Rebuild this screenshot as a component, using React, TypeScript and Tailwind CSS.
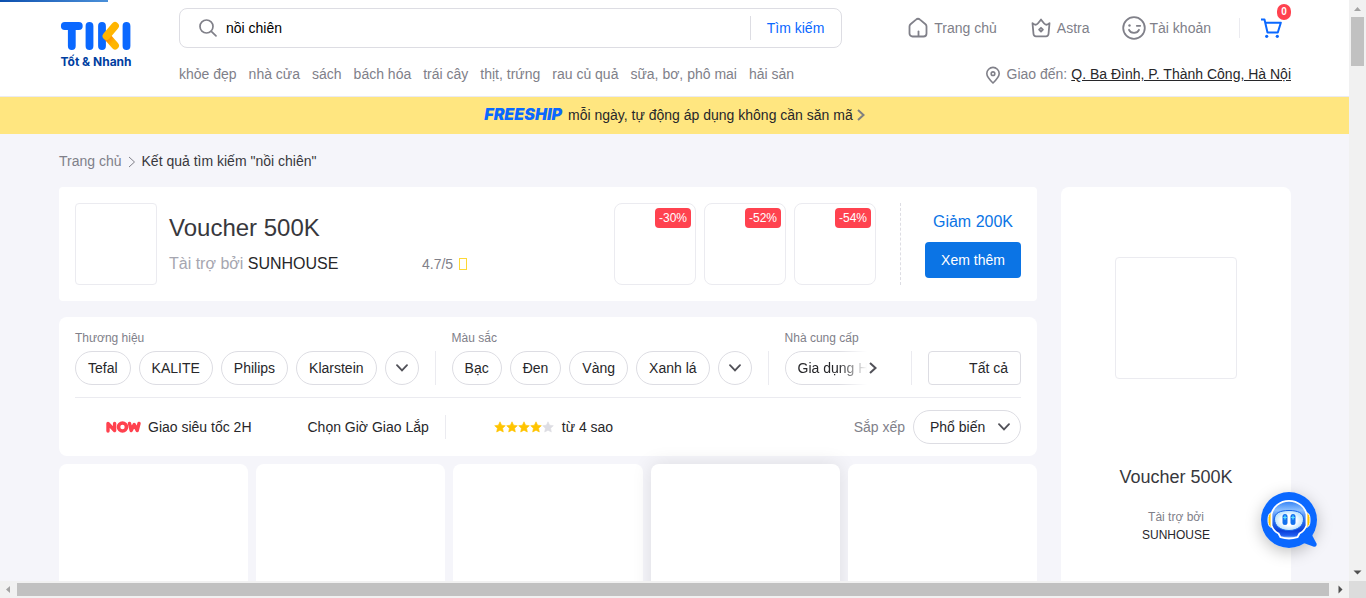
import type { ReactNode } from "react";

const quickLinks = [
  "khỏe đẹp",
  "nhà cửa",
  "sách",
  "bách hóa",
  "trái cây",
  "thịt, trứng",
  "rau củ quả",
  "sữa, bơ, phô mai",
  "hải sản",
];

function Chevron({ className = "", width = 2 }: { className?: string; width?: number }) {
  return (
    <svg viewBox="0 0 8 12" className={`h-3 w-2 ${className}`} fill="none" stroke="currentColor" strokeWidth={width} aria-hidden="true">
      <path d="M1 1l5.5 5L1 11" />
    </svg>
  );
}

function ChevronDown() {
  return (
    <svg viewBox="0 0 12 8" className="h-2 w-3" fill="none" stroke="#515158" strokeWidth="1.8" strokeLinecap="round" aria-hidden="true">
      <path d="M1 1.200l5 5.200 5-5.200" />
    </svg>
  );
}

function Logo() {
  return (
    <a href="#" className="flex w-[72px] shrink-0 flex-col items-center gap-0.5 pt-3">
      <svg viewBox="0 0 72 32" className="h-8 w-[72px]" fill="none" strokeWidth="7.800" strokeLinecap="round" aria-hidden="true">
        <defs>
          <linearGradient id="kFold" x1="0" y1="0" x2="1" y2="1">
            <stop offset="0.1" stopColor="#ff8a00" />
            <stop offset="0.7" stopColor="#ffb500" />
          </linearGradient>
        </defs>
        <path d="M5.800 6h14M12.800 6.500V26M30.500 6v20M43 6v20M67.500 6v20" stroke="#0a68ff" />
        <path d="M48.500 17L56 25.500" stroke="url(#kFold)" />
        <path d="M56 6L47.500 16" stroke="#ffb500" />
      </svg>
      <span className="whitespace-nowrap pl-0.5 font-['Inter'] text-[12px] font-bold leading-4 text-[#003ea1]">Tốt &amp; Nhanh</span>
    </a>
  );
}

function NavItem({ icon, children }: { icon: ReactNode; children: ReactNode }) {
  return (
    <a href="#" className="flex items-center gap-1 px-4 text-[#808089]">
      {icon}
      <span>{children}</span>
    </a>
  );
}

function HomeIcon() {
  return (
    <svg viewBox="0 0 24 24" className="size-6" fill="none" stroke="currentColor" strokeWidth="1.800" strokeLinecap="round" strokeLinejoin="round" aria-hidden="true">
      <path d="M3.500 10.500c0-.9.300-1.600 1-2.200l5.500-4.700a3 3 0 0 1 4 0l5.500 4.700c.7.6 1 1.300 1 2.200v7a3 3 0 0 1-3 3h-11a3 3 0 0 1-3-3z" />
      <path d="M12.500 15.500v4.500" />
    </svg>
  );
}

function CrownIcon() {
  return (
    <svg viewBox="0 0 24 24" className="size-6" fill="none" stroke="currentColor" strokeWidth="1.800" strokeLinecap="round" strokeLinejoin="round" aria-hidden="true">
      <path d="M3.500 7.200c1.500 1.400 2.700 1.900 4 1.300C9 7.800 10.500 5.500 12 3.500c1.500 2 3 4.300 4.500 5 1.300.6 2.500.1 4-1.300l-1 10.800a2.500 2.500 0 0 1-2.500 2.300H7A2.500 2.500 0 0 1 4.500 18z" />
      <path d="M12 11.800l1.900 1.900-1.900 1.900-1.900-1.900z" />
    </svg>
  );
}

function SmileIcon() {
  return (
    <svg viewBox="0 0 24 24" className="size-6" fill="none" stroke="currentColor" strokeWidth="1.800" strokeLinecap="round" aria-hidden="true">
      <circle cx="12" cy="12" r="10.800" />
      <path d="M7 13.800c.8 1.900 2.700 3 5 3s4.200-1.100 5-3M14.800 9.800h3.400" />
      <circle cx="7.500" cy="9.500" r="1.200" fill="currentColor" stroke="none" />
    </svg>
  );
}

function CartIcon() {
  return (
    <svg viewBox="0 0 24 24" className="size-6" fill="none" stroke="#0a68ff" strokeWidth="2" aria-hidden="true">
      <path d="M2 3.500h3.500l3 13h10.300l3-9.800H6.300" strokeLinejoin="round" />
      <circle cx="7.700" cy="20.300" r="1.600" fill="#0a68ff" stroke="none" />
      <circle cx="18.300" cy="20.300" r="1.600" fill="#0a68ff" stroke="none" />
    </svg>
  );
}

function Header() {
  return (
    <header className="border-b border-[#ebebf0] bg-white">
      <div className="flex gap-12 pt-2 pr-[58px] pb-2 pl-[59px]">
        <Logo />
        <div className="min-w-0 flex-1">
          <form className="flex h-10 items-center rounded-lg border border-[#dddde3] pl-[18px]">
            <svg viewBox="0 0 20 20" className="size-5 shrink-0" fill="none" stroke="#808089" strokeWidth="1.700" strokeLinecap="round" aria-hidden="true">
              <circle cx="8.500" cy="8.500" r="6.500" />
              <path d="M13.300 13.300l4.700 4.500" />
            </svg>
            <input aria-label="Tìm kiếm sản phẩm" defaultValue="nồi chiên" className="ml-2 h-9 min-w-0 flex-1 text-black outline-none" />
            <span className="h-6 w-px bg-[#dddde3]" />
            <button type="button" className="pr-[17px] pl-4 text-[#0a68ff]">
              Tìm kiếm
            </button>
          </form>
          <nav className="mt-4 flex h-6 flex-wrap gap-x-3 overflow-hidden leading-[21px] text-[#808089]">
            {quickLinks.map((l) => (
              <a key={l} href="#">
                {l}
              </a>
            ))}
          </nav>
        </div>
        <div className="flex shrink-0 flex-col items-end gap-4">
          <div className="flex h-10 items-center">
            <NavItem icon={<HomeIcon />}>Trang chủ</NavItem>
            <NavItem icon={<CrownIcon />}>Astra</NavItem>
            <NavItem icon={<SmileIcon />}>Tài khoản</NavItem>
            <span className="mx-3 h-5 w-px bg-[#ebebf0]" />
            <a href="#" aria-label="Giỏ hàng" className="relative mr-2 ml-[7px]">
              <CartIcon />
              <span className="absolute -top-3 left-[18px] flex h-4 w-3.5 items-center justify-center rounded-full bg-[#ff424f] text-[10px] font-bold text-white">
                0
              </span>
            </a>
          </div>
          <div className="flex items-center gap-1 leading-[21px] text-[#808089]">
            <svg viewBox="0 0 20 20" className="size-5" fill="none" stroke="currentColor" strokeWidth="1.600" aria-hidden="true">
              <path d="M10 18c-3.200-3-6.200-5.800-6.200-9.400a6.200 6.200 0 0 1 12.400 0C16.200 12.200 13.200 15 10 18z" />
              <circle cx="10" cy="8.700" r="1.800" />
            </svg>
            <span>Giao đến:</span>
            <a href="#" className="text-[#27272a] underline">
              Q. Ba Đình, P. Thành Công, Hà Nội
            </a>
          </div>
        </div>
      </div>
    </header>
  );
}

function Banner() {
  return (
    <a href="#" className="flex h-[37px] items-center justify-center bg-[#ffe680] pb-0.5 text-[#27272a]">
      <span className="mr-1.5 font-['Inter'] text-[16px] font-black italic text-[#0a68ff]">FREESHIP</span>
      <span>mỗi ngày, tự động áp dụng không cần săn mã</span>
      <Chevron className="ml-1 text-[#808080]" />
    </a>
  );
}

function VoucherCard() {
  return (
    <section className="flex rounded bg-white p-4">
      <div className="size-[82px] rounded border border-[#ebebf0]" />
      <div className="ml-3 flex flex-1 flex-col pt-[9px]">
        <h2 className="text-2xl leading-8 text-[#38383d]">Voucher 500K</h2>
        <div className="mt-2 flex items-center leading-6">
          <p className="w-[253px] text-base text-[#a6a6b0]">
            Tài trợ bởi <span className="text-[#27272a]">SUNHOUSE</span>
          </p>
          <span className="text-[#808089]">4.7/5</span>
          <span className="ml-1.5 h-3 w-2 border border-[#fdd836]" />
        </div>
      </div>
      <div className="flex gap-2">
        {["-30%", "-52%", "-54%"].map((d) => (
          <div key={d} className="flex size-[82px] items-start justify-end rounded-lg border border-[#ebebf0] p-1">
            <span className="rounded bg-[#ff424f] px-1 text-xs leading-5 font-medium text-white">{d}</span>
          </div>
        ))}
      </div>
      <div className="ml-6 flex flex-col items-center gap-2 border-l border-dashed border-[#dddde3] pt-[7px] pl-6">
        <span className="text-base text-[#0b74e5]">Giảm 200K</span>
        <button type="button" className="h-9 w-24 rounded bg-[#0b74e5] text-white">
          Xem thêm
        </button>
      </div>
    </section>
  );
}

const chip = "h-[34px] shrink-0 rounded-full border border-[#dddde3] px-3 whitespace-nowrap text-[#27272a]";

function FilterGroup({ title, options }: { title: string; options: string[] }) {
  return (
    <div className="flex flex-col gap-[5px]">
      <h3 className="text-xs leading-4 text-[#808089]">{title}</h3>
      <div className="flex gap-2">
        {options.map((o) => (
          <button key={o} type="button" className={chip}>
            {o}
          </button>
        ))}
        <button type="button" aria-label="Xem thêm" className="flex size-[34px] items-center justify-center rounded-full border border-[#dddde3]">
          <ChevronDown />
        </button>
      </div>
    </div>
  );
}

function Divider() {
  return <span className="mx-4 h-[34px] w-px shrink-0 bg-[#ebebf0]" />;
}

function NowMark() {
  return (
    <svg viewBox="0 0 35 12" className="h-3 w-[35px]" fill="none" stroke="#ff424f" strokeWidth="3.400" strokeLinecap="round" strokeLinejoin="round" aria-hidden="true">
      <path d="M2 10V2.500l6.600 7V2.500" />
      <circle cx="16.500" cy="6" r="4" strokeWidth="3.600" />
      <path d="M23.500 2.500l1.700 7 3-6 3 6L33 2.500" strokeWidth="3.400" />
    </svg>
  );
}

function Stars() {
  return (
    <svg viewBox="0 0 60 12" className="h-3 w-[60px]" aria-hidden="true">
      {[0, 1, 2, 3, 4].map((i) => (
        <path
          key={i}
          transform={`translate(${i * 12} 0)`}
          fill={i < 4 ? "#ffc400" : "#dddde3"}
          stroke={i < 4 ? "#ffc400" : "#dddde3"}
          strokeWidth="0.600"
          strokeLinejoin="round"
          d="M6 .8l1.600 3.400 3.700.5-2.700 2.600.7 3.700L6 9.200 2.700 11l.7-3.700L.7 4.700l3.700-.5z"
        />
      ))}
    </svg>
  );
}

function HiddenBox() {
  return <input type="checkbox" className="size-4 appearance-none" />;
}

function Filters() {
  return (
    <section className="mt-4 rounded-lg bg-white px-4 pt-[13px] pb-3">
      <div className="flex items-end border-b border-[#ebebf0] pb-3">
        <FilterGroup title="Thương hiệu" options={["Tefal", "KALITE", "Philips", "Klarstein"]} />
        <Divider />
        <FilterGroup title="Màu sắc" options={["Bạc", "Đen", "Vàng", "Xanh lá"]} />
        <Divider />
        <div className="flex min-w-0 flex-1 flex-col gap-[5px]">
          <h3 className="text-xs leading-4 text-[#808089]">Nhà cung cấp</h3>
          <div className="flex h-[34px] items-center">
            <div className="w-[82px] overflow-hidden [mask-image:linear-gradient(to_right,black_65%,transparent)]">
              <button type="button" className={chip}>
                Gia dụng HT
              </button>
            </div>
            <button type="button" aria-label="Tiếp theo" className="ml-0.5">
              <Chevron className="text-[#515158]" />
            </button>
          </div>
        </div>
        <Divider />
        <button type="button" className="h-[34px] rounded border border-[#dddde3] pr-3 pl-10 whitespace-nowrap text-[#27272a]">
          Tất cả
        </button>
      </div>
      <div className="flex items-center pt-3 text-[#27272a]">
        <label className="flex items-center gap-[7px] pl-2">
          <HiddenBox />
          <NowMark />
          Giao siêu tốc 2H
        </label>
        <label className="ml-8 flex items-center gap-2">
          <HiddenBox />
          Chọn Giờ Giao Lắp
        </label>
        <span className="mx-4 h-6 w-px bg-[#ebebf0]" />
        <label className="flex items-center gap-2 pl-2">
          <HiddenBox />
          <Stars />
          từ 4 sao
        </label>
        <label htmlFor="sort" className="ml-auto text-[#808089]">
          Sắp xếp
        </label>
        <div className="ml-2 grid items-center">
          <select id="sort" className="col-start-1 row-start-1 h-[34px] w-[108px] appearance-none rounded-full border border-[#dddde3] px-4 outline-none">
            <option>Phổ biến</option>
          </select>
          <span className="pointer-events-none col-start-1 row-start-1 mr-[11px] justify-self-end">
            <ChevronDown />
          </span>
        </div>
      </div>
    </section>
  );
}

function ChatBot() {
  return (
    <button type="button" aria-label="Trợ lý" className="absolute right-8 bottom-[33px] size-14 rounded-full shadow-[0_4px_16px_rgba(0,0,0,0.25)]">
      <svg viewBox="0 0 56 56" className="size-14 overflow-visible" aria-hidden="true">
        <defs>
          <linearGradient id="helmet" x1="0" y1="0" x2="0" y2="1">
            <stop offset="0" stopColor="#2f7ff5" />
            <stop offset="0.250" stopColor="#8cc0ff" />
            <stop offset="0.500" stopColor="#2f74f2" />
            <stop offset="0.800" stopColor="#0a3fd8" />
            <stop offset="0.920" stopColor="#1f5cf0" />
            <stop offset="1" stopColor="#8cc4ff" />
          </linearGradient>
          <radialGradient id="face">
            <stop offset="0.500" stopColor="#ffffff" />
            <stop offset="1" stopColor="#b9e2ff" />
          </radialGradient>
        </defs>
        <circle cx="28" cy="28" r="28" fill="#0a68ff" />
        <path d="M51 43l4.500 8.500c.7 2-.6 3.500-2.600 3.200L40 50z" fill="#0a68ff" />
        <path d="M12 21H9.500c-2 1-2.500 3.500-2.500 7s.5 6 2.500 7H12zM44 21h2.500c2 1 2.500 3.500 2.500 7s-.5 6-2.500 7H44z" fill="#ffc400" stroke="#fff" strokeWidth="1" />
        <path d="M28 8.800c-9.500 0-16 6.500-17.500 13.200v11.500c1.500 4 4 6.500 7 8l2 3.700c5 1.500 12 1.500 17 0l2-3.700c3-1.500 5.500-4 7-8V22C44 15.300 37.500 8.800 28 8.800z" fill="url(#helmet)" stroke="#fff" strokeWidth="1.800" />
        <path d="M28 18.500c9 0 14.500 2.500 14.500 8.700S37 38.500 28 38.500 13.500 33.400 13.500 27.200 19 18.500 28 18.500z" fill="url(#face)" stroke="#1463e8" strokeWidth="1" />
        <rect x="21.500" y="22" width="5" height="11" rx="2.500" fill="#1472ee" />
        <rect x="29.500" y="22" width="5" height="11" rx="2.500" fill="#1472ee" />
        <path d="M24 23.500v4M22.200 25.500h3.600M32 23.500v4M30.200 25.500h3.600" stroke="#5ee6ff" strokeWidth="1.200" />
      </svg>
    </button>
  );
}

function Arrow({ d, muted }: { d: string; muted?: boolean }) {
  return (
    <svg viewBox="0 0 17 17" className="size-[17px] shrink-0" fill={muted ? "#a3a3a3" : "#505050"} aria-hidden="true">
      <path d={d} />
    </svg>
  );
}

export default function App() {
  return (
    <div className="flex h-screen flex-col overflow-hidden font-['Liberation_Sans',Arial,sans-serif] text-sm">
      <div className="flex min-h-0 flex-1">
        <div className="relative min-w-0 flex-1 overflow-hidden bg-[#f5f5fa]">
          <div className="absolute top-0 left-0 h-0.5 w-[8%] bg-linear-to-r from-[#0b4fae] to-[#4a90d9]" />
          <Header />
          <Banner />
          <main className="pr-[58px] pl-[59px]">
            <nav className="flex items-center pt-[17px] pb-[15px] leading-[21px]">
              <a href="#" className="text-[#808089]">
                Trang chủ
              </a>
              <Chevron width={1} className="mx-1.5 text-[#808089]" />
              <span className="text-[#38383d]">Kết quả tìm kiếm "nồi chiên"</span>
            </nav>
            <div className="flex gap-6">
              <div className="min-w-0 flex-1">
                <VoucherCard />
                <Filters />
                <div className="mt-2 grid grid-cols-5 gap-2">
                  {[0, 1, 2, 3, 4].map((i) => (
                    <article key={i} className={i === 3 ? "h-80 rounded-lg bg-white shadow-[0_0_20px_rgba(0,0,20,0.1)]" : "h-80 rounded-lg bg-white"} />
                  ))}
                </div>
              </div>
              <aside className="flex w-[230px] flex-col items-center rounded-lg bg-white pt-[70px]">
                <div className="size-[122px] rounded border border-[#ebebf0]" />
                <h2 className="mt-[84px] text-lg leading-7 text-[#38383d]">Voucher 500K</h2>
                <p className="mt-[17px] text-center text-xs leading-[18px] text-[#808089]">
                  Tài trợ bởi
                  <span className="block text-[#27272a]">SUNHOUSE</span>
                </p>
              </aside>
            </div>
          </main>
          <ChatBot />
        </div>
        <div className="flex w-[17px] flex-col items-center bg-[#f1f1f1]" aria-hidden="true">
          <Arrow muted d="M5 11h7L8.500 7z" />
          <div className="h-[49px] w-[13px] bg-[#c1c1c1]" />
          <div className="flex-1" />
          <Arrow d="M4.500 6.500h8l-4 4z" />
        </div>
      </div>
      <div className="flex h-[17px] shrink-0 items-center bg-[#f1f1f1]" aria-hidden="true">
        <Arrow muted d="M10 5v7L6 8.500z" />
        <div className="h-[13px] flex-1 bg-[#c1c1c1]" />
        <div className="w-[3px]" />
        <Arrow d="M6.500 4.500v8l4-4z" />
        <div className="size-[17px] bg-[#dcdcdc]" />
      </div>
    </div>
  );
}
